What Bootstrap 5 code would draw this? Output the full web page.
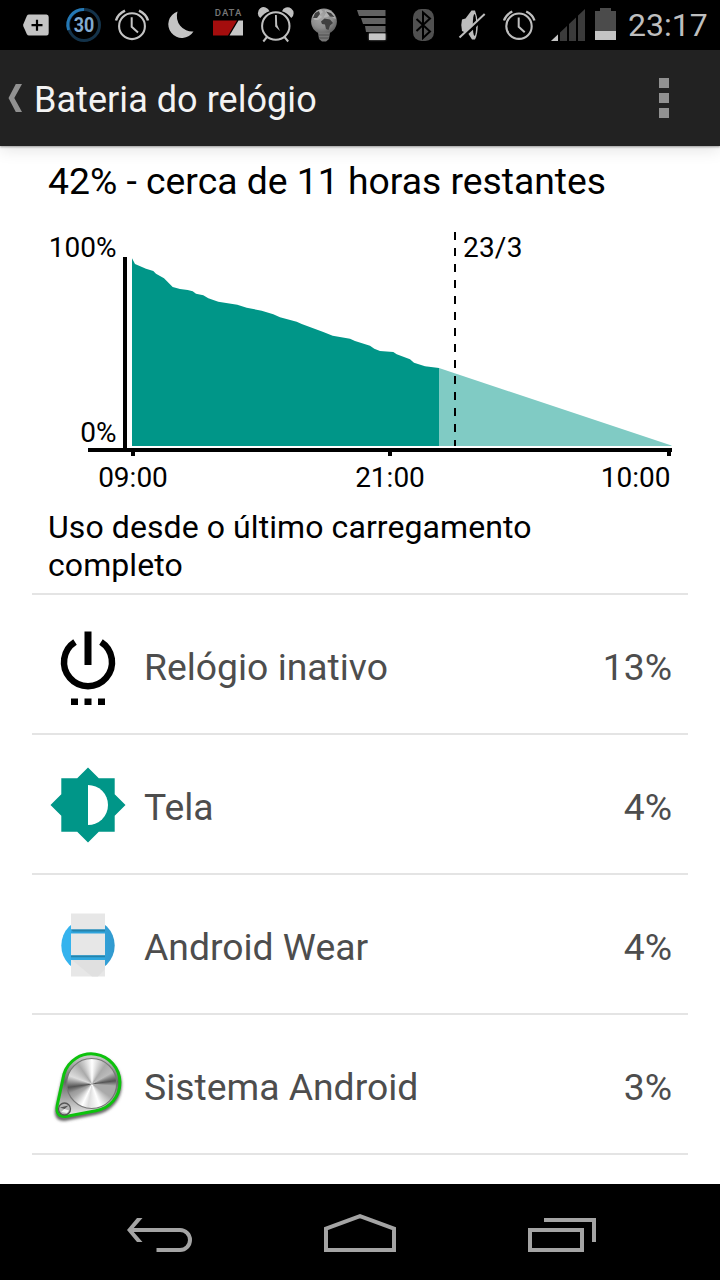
<!DOCTYPE html>
<html lang="pt-BR">
<head>
<meta charset="utf-8">
<meta name="viewport" content="width=device-width, initial-scale=1">
<title>Bateria do relógio</title>
<link href="https://cdn.jsdelivr.net/npm/bootstrap@5.3.0/dist/css/bootstrap.min.css" rel="stylesheet">
<style>
  body { font-family: Roboto, "Noto Sans", sans-serif; width: 720px; height: 1280px; overflow: hidden; color: #000; }
  svg { display: block; flex: none; }
  .status-bar { height: 50px; background: #000; }
  .clock { font-size: 32px; line-height: 50px; color: #bebebe; margin-left: 11px; white-space: nowrap; }
  .app-bar { height: 96px; background: #222; color: #f3f3f3; box-shadow: 0 1px 2px rgba(0,0,0,.35), 0 3px 16px rgba(0,0,0,.12); z-index: 2; }
  .app-title { font-size: 36px; line-height: 92px; margin-left: 10px; padding-top: 4px; letter-spacing: .05px; }
  .overflow-menu { gap: 5px; margin-right: 51px; padding-bottom: 1px; }
  .overflow-menu span { width: 10px; height: 10px; background: #919191; }
  .summary { font-size: 37.3px; line-height: 42px; padding: 14px 48px 0; height: 74px; white-space: nowrap; }
  .chart text { font-size: 28px; fill: #000; }
  .usage-title { font-size: 32px; line-height: 38px; padding: 8px 140px 9px 16px; margin: 0 32px; height: 95px; border-bottom: 2px solid #e4e4e4; letter-spacing: .08px; }
  .usage-list { margin: 0 32px; }
  .usage-list .usage-row { height: 140px; border: 0; border-bottom: 2px solid #e4e4e4; padding: 2px 16px 0; font-size: 37.3px; color: #4d4d4d; background: none; }
  .usage-row .usage-name { margin-left: 16px; padding-top: 5px; white-space: nowrap; }
  .usage-row .usage-value { padding-top: 5px; }
  .nav-keys { height: 96px; background: #000; }
</style>
</head>
<body class="d-flex flex-column bg-white m-0">
<div class="status-bar d-flex align-items-center">
  <svg width="60" height="50" viewBox="0 0 60 50"><path d="M29 14.5H46.500Q48.700 14.500 48.700 17V33Q48.700 35.500 46.500 35.500H29Q27.600 35.500 26.900 34.200L23.200 26V24.500L26.900 15.800Q27.600 14.500 29 14.500Z" fill="#c4c4c4"/><path d="M31.500 25.200H42.500M37 19.700V30.700" stroke="#000" stroke-width="2.200"/></svg>
  <svg width="48" height="50" viewBox="60 0 48 50"><circle cx="84" cy="25" r="15.500" fill="none" stroke="#14334a" stroke-width="3"/><path d="M68.600 30A15.500 15.500 0 0 1 84 9.500" fill="none" stroke="#2478b4" stroke-width="3"/><text x="84" y="31.800" font-size="19.500" font-weight="700" text-anchor="middle" textLength="20.500" lengthAdjust="spacingAndGlyphs" fill="#82abd0">30</text></svg>
  <svg width="48" height="50" viewBox="108 0 48 50"><g fill="none" stroke="#c4c4c4"><circle cx="132" cy="26.200" r="12.900" stroke-width="2.100"/><path d="M116 20.500Q118 14 125 10.700M148 20.500Q146 14 139 10.700" stroke-width="2.500"/><path d="M131.700 17.300V26.800L138 32.500" stroke-width="2"/></g></svg>
  <svg width="48" height="50" viewBox="156 0 48 50"><path d="M177.500 11.500A13.600 13.600 0 1 0 193.500 31.500A15.500 15.500 0 0 1 177.500 11.500Z" fill="#c4c4c4"/></svg>
  <svg width="48" height="50" viewBox="204 0 48 50"><text x="214.800" y="16.400" font-size="9.600" font-weight="500" fill="#777" textLength="26.500">DATA</text><path d="M213 20.500H237L228 35.500H213Z" fill="#a40d0d"/><path d="M238.500 20.500H243V35.500H229.500Z" fill="#c7c7c7"/></svg>
  <svg width="48" height="50" viewBox="252 0 48 50"><path d="M260.300 18A6 6 0 1 1 269.500 11.200Q264 13 260.300 18ZM291.300 18A6 6 0 1 0 282 11.200Q287.500 13 291.300 18Z" fill="#bfbfbf"/><g fill="none" stroke="#bfbfbf" stroke-width="2"><circle cx="275.800" cy="26" r="13.700"/><path d="M267 37L263.300 41.500M284.500 37L288.200 41.500"/></g><path d="M275 15H276.800L277.200 25L280 31L275.200 26.500Z" fill="#bfbfbf"/></svg>
  <svg width="48" height="50" viewBox="300 0 48 50"><defs><radialGradient id="globeFill" cx=".4" cy=".3" r=".75"><stop stop-color="#a8a8a8"/><stop offset=".6" stop-color="#8c8c8c"/><stop offset="1" stop-color="#5a5a5a"/></radialGradient></defs><circle cx="324" cy="21.500" r="12.900" fill="url(#globeFill)"/><path d="M312.500 16Q315 10.500 321 9.500L323 12L319.500 15L322 17L318 20L314.500 20ZM323.500 17.500L326 13L324.500 10L330 10.500L334 14L336 19L333 18L331 15.500L327 17Z" fill="#bdbdbd" opacity=".7"/><path d="M315 13L319 11L320 14L317 18L313 18ZM321 21.500L324.500 18.500L330 19.500L333 23L330 25.500L328.500 30L326 29L325 24.500L322 24ZM326 11.500L331 13L334.500 17L330 16.500Z" fill="#404040"/><path d="M318 32.500H330L329 39L326 41.500H322L319 39Z" fill="#777"/><path d="M318 35H330M319 38H329" stroke="#444" stroke-width=".8"/></svg>
  <svg width="51" height="50" viewBox="348 0 51 50"><path d="M357 10H385.500V16H359ZM361 18H385.500V24H363ZM365 26H385.500V32H366Z" fill="#626262"/><path d="M369 33.500H385.500V40H369Z" fill="#c6c6c6" style="filter:drop-shadow(0 0 1px #888)"/></svg>
  <svg width="48" height="50" viewBox="399 0 48 50"><rect x="413" y="9" width="21" height="32" rx="8.500" fill="#505050"/><path d="M416.500 19L430 31.500L423 38V12.500L430 18.500L416.500 31" fill="none" stroke="#000" stroke-width="2"/></svg>
  <svg width="48" height="50" viewBox="447 0 48 50"><path d="M462 19.500L465.500 18.500L471.500 10.500H475Q477.800 17 477.800 25Q477.800 34 475 39.500H472L468.500 34L462 31Q460.500 25 462 19.500Z" fill="#bdbdbd"/><ellipse cx="474.500" cy="25" rx="1.700" ry="11" fill="#000"/><path d="M460.500 38.800L486 15.700" stroke="#000" stroke-width="3.200"/><path d="M459.500 37.500L484.700 14" stroke="#bdbdbd" stroke-width="2"/></svg>
  <svg width="48" height="50" viewBox="495 0 48 50"><g fill="none" stroke="#bebebe"><circle cx="519" cy="26.200" r="12.700" stroke-width="2.100"/><path d="M504 20.500Q506 14.500 512.300 11.500M534.500 20.500Q532.500 14.500 526.200 11.500" stroke-width="2.300"/><path d="M518.700 17.500V26.800L524.700 32.300" stroke-width="2"/></g></svg>
  <svg width="43" height="50" viewBox="543 0 43 50"><path d="M551 41L585 9V41Z" fill="#3b3b3b"/><path d="M551 41L558 34.400V41Z" fill="#c6c6c6"/><path d="M559 8V42M568 8V42M577 8V42" stroke="#000" stroke-width="2"/></svg>
  <svg width="31" height="50" viewBox="586 0 31 50"><path d="M595 11H600V8H611V11H616V31H595Z" fill="#4b4b4b"/><path d="M595 31H616V40H595Z" fill="#c4c4c4"/></svg>
  <span class="clock">23:17</span>
</div>

<header class="app-bar d-flex align-items-center position-relative">
  <svg width="24" height="96" viewBox="0 50 24 96"><path d="M15.800 84H22L14.300 98L22 112H15.800L8.500 98Z" fill="#919191"/></svg>
  <h1 class="app-title fw-normal mb-0">Bateria do relógio</h1>
  <div class="overflow-menu d-flex flex-column ms-auto"><span></span><span></span><span></span></div>
</header>

<main class="flex-grow-1">
  <div class="summary">42% - cerca de 11 horas restantes</div>
  <svg class="chart" width="720" height="280" viewBox="0 220 720 280">
    <path d="M132 446V258.300L135 264L146 268.700L153.300 271L156 273.700L164 278.300L172.700 287L180 289L187.700 290L192.700 291.300L196 293.700L203.300 295.300L208.300 298.300L218.300 301.700L237.300 304.700L246.700 307.700L261.700 310.700L273.300 314.300L280 317.300L296.700 321.700L301.700 324L323.300 332L332.700 335.700L350 338.700L355 341L370 345.700L374.300 348.700L380 351L393.300 352L396.700 354.300L410 359.300L414 362.700L425 366.300L439 368V446Z" fill="#009688"/>
    <path d="M439 368L671.500 445.500V446H439Z" fill="#80cbc4"/>
    <path d="M455 232V446" stroke="#000" stroke-width="2" stroke-dasharray="8 8"/>
    <path d="M123 257H127V448H672V452H671V456H667V452H392V456H388V452H135V456H131V452H88V448H123Z" fill="#000"/>
    <text x="116.500" y="257" text-anchor="end">100%</text>
    <text x="116.500" y="442" text-anchor="end">0%</text>
    <text x="463" y="257" letter-spacing=".2">23/3</text>
    <text x="133" y="487" text-anchor="middle">09:00</text>
    <text x="390" y="487" text-anchor="middle">21:00</text>
    <text x="670.500" y="487" text-anchor="end">10:00</text>
  </svg>
  <h2 class="usage-title fw-normal">Uso desde o último carregamento completo</h2>
  <div class="usage-list d-flex flex-column">
    <div class="usage-row d-flex align-items-center">
      <svg width="80" height="80" viewBox="48 625 80 80"><path d="M75 642A24 24 0 1 0 101 642" fill="none" stroke="#000" stroke-width="6.500"/><path d="M84.500 631.500H91.500V665H84.500ZM71 698.500H78V705H71ZM84.500 698.500H91.500V705H84.500ZM98 698.500H105V705H98Z"/></svg>
      <span class="usage-name">Relógio inativo</span><span class="usage-value ms-auto">13%</span>
    </div>
    <div class="usage-row d-flex align-items-center">
      <svg width="80" height="80" viewBox="48 765 80 80"><path d="M88 767.500L98.800 778.300H114.700V794.200L125.500 805L114.700 815.800V831.700H98.800L88 842.500L77.200 831.700H61.300V815.800L50.500 805L61.300 794.200V778.300H77.200Z" fill="#009688"/><path d="M88 785A20 20 0 0 1 88 825Z" fill="#fff"/></svg>
      <span class="usage-name">Tela</span><span class="usage-value ms-auto">4%</span>
    </div>
    <div class="usage-row d-flex align-items-center">
      <svg width="80" height="80" viewBox="48 905 80 80"><defs><linearGradient id="wearBlue"><stop offset=".3" stop-color="#35b3ee"/><stop offset="1" stop-color="#3199ce"/></linearGradient></defs><circle cx="88" cy="945.500" r="26.700" fill="url(#wearBlue)"/><path d="M71 913.500H105V930H71ZM71 960H105V976.500H71Z" fill="#e7e7e7"/><path d="M71 929.500H105V933.500H71Z" fill="#30a4dc"/><path d="M71 929.500H105V931.500H73Z" fill="#2583ab"/><path d="M71 933.500H105V955.500H71Z" fill="#e7e7e7"/><path d="M71 955.500H105V960H71Z" fill="#30a8df"/><path d="M71 955.500H105V957.300H71Z" fill="#2583ab"/><path d="M72 960H105V969L98 976.500H92Z" fill="#e0e0e0"/></svg>
      <span class="usage-name">Android Wear</span><span class="usage-value ms-auto">4%</span>
    </div>
    <div class="usage-row d-flex align-items-center">
      <svg width="80" height="80" viewBox="48 1045 80 80"><defs>
        <clipPath id="dialClip"><circle cx="91.700" cy="1083.500" r="25"/></clipPath>
        <linearGradient id="plate" x2="0" y2="1"><stop stop-color="#d2d2d2"/><stop offset=".45" stop-color="#666"/><stop offset="1" stop-color="#eee"/></linearGradient>
        <filter id="soft" x="-20%" y="-20%" width="150%" height="150%"><feGaussianBlur stdDeviation="1.700"/></filter></defs>
        <path d="M65 1074A28 28 0 1 1 96 1110.500L66 1116.500Q55 1118 57.500 1106Z" transform="translate(0 2)" fill="none" stroke="#555" stroke-width="4" filter="url(#soft)"/>
        <path d="M64 1074A28.600 28.600 0 1 1 96 1110.700L67 1116.200Q55 1118 57.300 1105Z" fill="url(#plate)" stroke="#0dc20d" stroke-width="3"/>
        <foreignObject x="66" y="1058" width="52" height="52" clip-path="url(#dialClip)"><div xmlns="http://www.w3.org/1999/xhtml" style="width:52px;height:52px;background:conic-gradient(#fff,#aaa 35deg,#bbb 60deg,#555 82deg,#aaa 95deg,#aaa 125deg,#fff 160deg,#ddd 190deg,#fff 205deg,#aaa 235deg,#999 247deg,#555 262deg,#ddd 290deg,#aaa 325deg,#fff)"></div></foreignObject>
        <circle cx="91.700" cy="1083.500" r="25" fill="none" stroke="#777" stroke-width="1.200"/>
        <circle cx="64.500" cy="1109" r="6" fill="#b5b5b5" stroke="#555" stroke-width="1.300"/><path d="M60 1107.500L64.500 1109L68.500 1105.500Z" fill="#555"/><path d="M61 1112L64.500 1109L69 1110.500L67 1113Z" fill="#f3f3f3"/></svg>
      <span class="usage-name">Sistema Android</span><span class="usage-value ms-auto">3%</span>
    </div>
  </div>
</main>

<nav class="nav-keys d-flex align-items-center">
  <svg width="264" height="96" viewBox="0 1184 264 96"><path d="M130 1230H180A10 10 0 0 1 180 1250H156.500" fill="none" stroke="#a4a4a4" stroke-width="4"/><path d="M137 1218H142.500L132 1230L142.500 1242H137L127 1230Z" fill="#a4a4a4"/></svg>
  <svg width="192" height="96" viewBox="264 1184 192 96"><path d="M326 1250V1228.700L360 1216.200L394 1228.700V1250Z" fill="none" stroke="#a4a4a4" stroke-width="4"/></svg>
  <svg width="264" height="96" viewBox="456 1184 264 96"><path d="M530 1230H582V1250H530ZM544 1220H594V1242" fill="none" stroke="#a4a4a4" stroke-width="4"/></svg>
</nav>
<script src="https://cdn.jsdelivr.net/npm/bootstrap@5.3.0/dist/js/bootstrap.bundle.min.js"></script>
</body>
</html>
